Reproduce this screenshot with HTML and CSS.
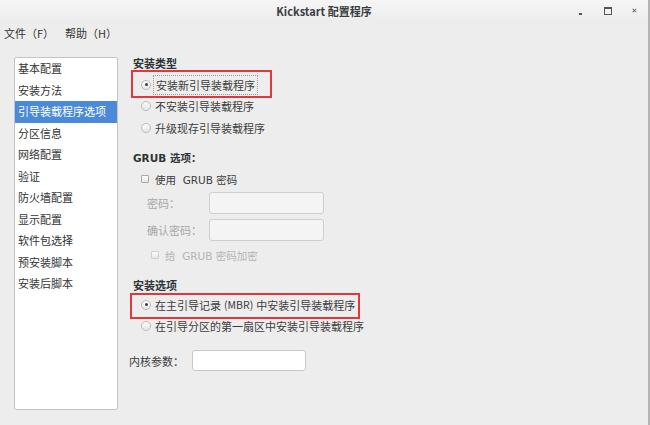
FILE: index.html
```html
<!DOCTYPE html>
<html lang="zh-CN">
<head>
	<meta charset="UTF-8">
	<title>Kickstart 配置程序</title>
	<link rel="stylesheet" href="styles.css">
</head>
<body>
	<div class="window">
		<!-- 标题栏 -->
		<div class="titlebar">
			<span></span>
			<span class="title">Kickstart 配置程序</span>
			<div class="wm-btns">
				<span class="wm-min"></span>
				<span class="wm-max"></span>
				<span class="wm-close">&#x2715;</span>
			</div>
		</div>
		<!-- 菜单 -->
		<div class="menubar">
			<span>文件（F）</span>
			<span>帮助（H）</span>
		</div>

		<div class="main">
			<!-- 左侧列表 -->
			<ul class="nav">
				<li>基本配置</li>
				<li>安装方法</li>
				<li class="sel">引导装载程序选项</li>
				<li>分区信息</li>
				<li>网络配置</li>
				<li>验证</li>
				<li>防火墙配置</li>
				<li>显示配置</li>
				<li>软件包选择</li>
				<li>预安装脚本</li>
				<li>安装后脚本</li>
			</ul>

			<div class="panel">
				<div class="sec-title">安装类型</div>
				<div class="opts first">
					<div class="opt"><span class="radio on"></span><span class="focus">安装新引导装载程序</span></div>
					<div class="opt"><span class="radio"></span>不安装引导装载程序</div>
					<div class="opt"><span class="radio"></span>升级现存引导装载程序</div>
				</div>

				<div class="sec-title grub">GRUB 选项：</div>
				<div class="check-row"><span class="check"></span>使用&nbsp; GRUB 密码</div>
				<div class="field first-field">
					<span class="label">密码：</span>
					<span class="input off"></span>
				</div>
				<div class="field">
					<span class="label">确认密码：</span>
					<span class="input off"></span>
				</div>
				<div class="check-row sub dim"><span class="check"></span>给&nbsp; GRUB 密码加密</div>

				<div class="sec-title inst">安装选项</div>
				<div class="opts second">
					<div class="opt"><span class="radio on"></span>在主引导记录<span class="mbr">(MBR)</span>中安装引导装载程序</div>
					<div class="opt"><span class="radio"></span>在引导分区的第一扇区中安装引导装载程序</div>
				</div>

				<div class="kernel">
					<span class="label">内核参数：</span>
					<span class="input"></span>
				</div>
			</div>
		</div>

		<!-- 标注框 -->
		<div class="mark mark1"></div>
		<div class="mark mark2"></div>
	</div>
</body>
</html>
```

FILE: styles.css
```css
*{margin: 0;padding: 0;box-sizing: border-box;}
body{width: 650px;height: 425px;overflow: hidden;background: #ededed;
	font-family: "DejaVu Sans", "Noto Sans CJK SC", sans-serif;font-size: 11px;color: #2e3436;}

.window{position: relative;width: 650px;height: 425px;background: #ededed;border-right: 2px solid #b4b4b4;}

.titlebar{height: 22px;display: grid;grid-template-columns: 1fr auto 1fr;align-items: center;
	background: linear-gradient(#f6f6f6, #ececec);}
.titlebar .title{font-family: "Noto Sans CJK SC", sans-serif;font-size: 11px;font-weight: bold;color: #3a3d3f;}
.wm-btns{display: flex;justify-content: flex-end;align-items: center;padding-right: 0;}
.wm-btns span{width: 27px;height: 12px;display: flex;justify-content: center;align-items: center;color: #505050;}
.wm-min::before{content: "";display: block;width: 3px;height: 2px;background: #555;margin-top: 6px;}
.wm-max::before{content: "";display: block;width: 6px;height: 5px;border: 1.5px solid #555;border-top-width: 2px;}
.wm-close{font-size: 7px;font-weight: bold;}

.menubar{height: 24px;line-height: 22px;padding-left: 4px;display: flex;gap: 11px;
	font-family: "Noto Sans CJK SC", sans-serif;font-size: 11px;color: #333;}

.main{display: flex;padding: 9px 0 0 14px;}

.nav{list-style: none;width: 104px;height: 353px;margin-top: 2px;background: #fff;
	border: 1px solid #c4c4c4;border-radius: 2px;font-family: "Noto Sans CJK SC", sans-serif;}
.nav li{height: 21.5px;line-height: 21px;padding-left: 3px;color: #333;white-space: nowrap;}
.nav li.sel{background: #4a8ad8;color: #fff;}

.panel{margin-left: 11px;font-family: "Noto Sans CJK SC", sans-serif;}
.sec-title{height: 16px;line-height: 16px;padding-left: 4px;font-weight: bold;color: #2e3436;}
.sec-title.grub{margin-top: 11.5px;font-family: "DejaVu Sans", "Noto Sans CJK SC", sans-serif;font-size: 10.5px;}
.sec-title.inst{margin-top: 11px;}

.opts.first{margin-top: 3px;}
.opts.second{margin-top: 1px;}
.opt{height: 21.5px;display: flex;align-items: center;padding-left: 12px;color: #3c3c3c;white-space: nowrap;}
.opt .mbr{padding: 0 3px;font-size: 10.5px;}
.radio{width: 10px;height: 10px;border-radius: 50%;border: 1px solid #b9b9b9;margin-right: 4px;
	background: linear-gradient(#fdfdfd, #e6e6e6);display: flex;justify-content: center;align-items: center;}
.radio.on::after{content: "";width: 3px;height: 3px;border-radius: 50%;background: #3a3a3a;}
.focus{outline: 1px dotted #9a9a9a;outline-offset: 1px;padding: 0 1px;}

.check-row{height: 22px;margin-top: 2px;display: flex;align-items: center;padding-left: 12px;color: #3c3c3c;
	font-family: "DejaVu Sans", "Noto Sans CJK SC", sans-serif;font-size: 10.5px;white-space: nowrap;}
.check{width: 8px;height: 8px;border: 1px solid #a9a9a9;border-radius: 1px;margin-right: 6px;
	background: linear-gradient(#fdfdfd, #e6e6e6);}
.check-row.sub{margin-top: 3px;padding-left: 22px;}
.check-row.dim{color: #b4b4b4;}
.check-row.dim .check{border-color: #cfcfcf;}

.field{height: 22px;display: flex;align-items: center;padding-left: 18px;}
.field.first-field{margin-top: 2px;}
.field + .field{margin-top: 5px;}
.field .label{width: 62px;color: #a8a8a8;}
.input{display: block;width: 115px;height: 22px;background: #fff;border: 1px solid #c8c8c8;border-radius: 3px;}
.input.off{background: #f4f4f4;border-color: #cfcfcf;}

.kernel{margin-top: 13px;height: 21px;display: flex;align-items: center;}
.kernel .label{width: 63px;color: #3c3c3c;}
.kernel .input{width: 114px;height: 21px;}

.mark{position: absolute;border: 2px solid #e2383c;}
.mark1{left: 131px;top: 70px;width: 141px;height: 28px;}
.mark2{left: 130px;top: 293px;width: 230px;height: 26px;}
```
